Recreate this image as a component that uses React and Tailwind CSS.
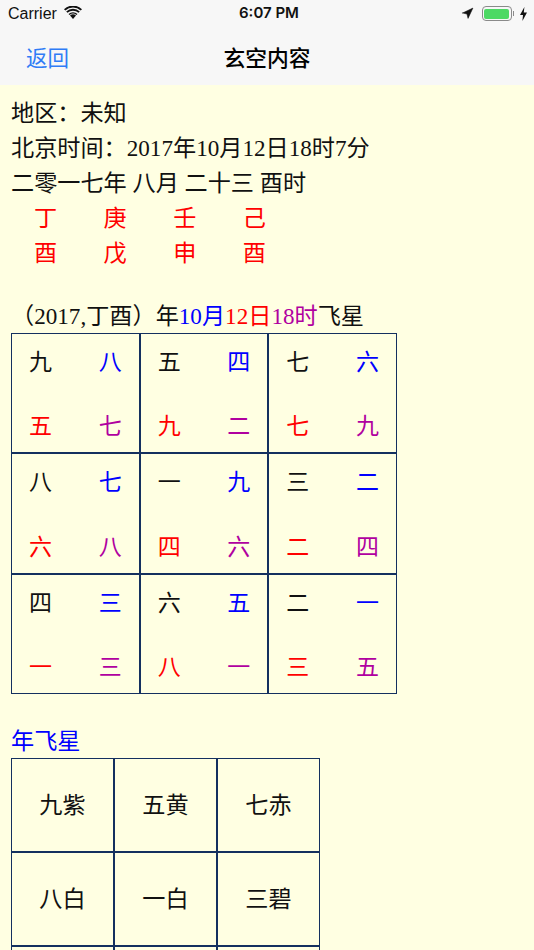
import { Navigation } from "lucide-react";

const SERIF = "font-['Liberation_Serif','Noto_Sans_CJK_SC',serif]";

const GANZHI = [
  ["丁", "庚", "壬", "己"],
  ["酉", "戊", "申", "酉"],
];

const FLY = [
  ["九", "八", "五", "七"],
  ["五", "四", "九", "二"],
  ["七", "六", "七", "九"],
  ["八", "七", "六", "八"],
  ["一", "九", "四", "六"],
  ["三", "二", "二", "四"],
  ["四", "三", "一", "三"],
  ["六", "五", "八", "一"],
  ["二", "一", "三", "五"],
];

// the third row of this table starts right at the bottom edge, its text is below the fold
const YEAR = ["九紫", "五黄", "七赤", "八白", "一白", "三碧", "", "", ""];

function Wifi() {
  return (
    <svg width="18" height="13" viewBox="0 0 18 13" className="ml-[7px] -mt-[2px]">
      <path d="M9 13 L6 9.6 A4.6 4.6 0 0 1 12 9.6 Z" fill="#111" />
      <path d="M4.5 7.9 A6.9 6.9 0 0 1 13.5 7.9 L12.4 9 A5.4 5.4 0 0 0 5.6 9 Z" fill="#111" />
      <path d="M2.2 5.5 A10 10 0 0 1 15.8 5.5 L14.5 6.8 A8.2 8.2 0 0 0 3.5 6.8 Z" fill="#111" />
      <path d="M0 3.2 A13 13 0 0 1 18 3.2 L16.7 4.5 A11.2 11.2 0 0 0 1.3 4.5 Z" fill="#111" />
    </svg>
  );
}

function Bolt() {
  return (
    <svg width="7" height="14" viewBox="0 0 7 14">
      <path d="M4.4 0 L0 8 L3 8 L2.4 14 L7 5.6 L3.8 5.6 Z" fill="#111" />
    </svg>
  );
}

function StatusBar() {
  return (
    <div className="h-[27px] flex items-center justify-between relative pl-2 pr-[7px] text-[16px] text-[#111] font-['Liberation_Sans',sans-serif]">
      <div className="flex items-center">
        <span>Carrier</span>
        <Wifi />
      </div>
      <span className="absolute left-[239px] text-[15px] font-semibold font-['Inter',sans-serif]">6:07 PM</span>
      <div className="flex items-center">
        <Navigation size={13} fill="#111" strokeWidth={1} className="mr-[8px]" />
        <div className="w-[30px] h-[15px] rounded-[4px] border-[1.5px] border-[#8a8a8a] p-[1.5px]">
          <div className="w-full h-full rounded-[2px] bg-[#4cd964]" />
        </div>
        <div className="w-[1.5px] h-[5px] bg-[#8a8a8a] ml-[1px] mr-[6px]" />
        <Bolt />
      </div>
    </div>
  );
}

function NavBar() {
  return (
    <div className="h-[58px] flex items-center justify-center relative pt-[2px] font-['Noto_Sans_CJK_SC',sans-serif]">
      <span className="absolute left-[26px] text-[21.5px] text-[#2f7cf6]">返回</span>
      <span className="text-[21.75px] font-medium text-black">玄空内容</span>
    </div>
  );
}

function FlyCell({ c }) {
  return (
    <div className="border border-[#14305f] grid grid-cols-2 grid-rows-2 h-[120.33px] px-[17px] pt-[11px] pb-[8px] text-[23px] leading-[35px]">
      <span className="text-[#111]">{c[0]}</span>
      <span className="text-[#0000ff] text-right">{c[1]}</span>
      <span className="text-[#ff0000] self-end">{c[2]}</span>
      <span className="text-[#b000a0] text-right self-end">{c[3]}</span>
    </div>
  );
}

export default function App() {
  return (
    <div className="w-[534px] h-[950px] overflow-hidden bg-[#ffffe2]">
      <div className="bg-[#f7f7f7] h-[85px]">
        <StatusBar />
        <NavBar />
      </div>
      <div className={`${SERIF} pl-[11px] pt-[11px] text-[23.15px] leading-[35px] text-[#111]`}>
        <div>地区：未知</div>
        <div>北京时间：2017年10月12日18时7分</div>
        <div>二零一七年 八月 二十三 酉时</div>
        {GANZHI.map((row, i) => (
          <div key={i} className="flex pl-[23px] text-[#ff0000]">
            {row.map((g, j) => (
              <span key={j} className="w-[69.6px]">{g}</span>
            ))}
          </div>
        ))}
        <div className="mt-[28px] h-[34px]">
          <span>（2017,丁酉）年</span>
          <span className="text-[#0000ff]">10月</span>
          <span className="text-[#ff0000]">12日</span>
          <span className="text-[#b000a0]">18时</span>
          <span>飞星</span>
        </div>
        <div className="grid grid-cols-3 w-[386px]">
          {FLY.map((c, i) => (
            <FlyCell key={i} c={c} />
          ))}
        </div>
        <div className="mt-[30px] h-[34px] text-[#0000ff]">年飞星</div>
        <div className="grid grid-cols-3 w-[309px]">
          {YEAR.map((t, i) => (
            <div key={i} className="border border-[#14305f] h-[94px] pt-[2px] flex items-center justify-center text-[#111]">
              {t}
            </div>
          ))}
        </div>
      </div>
    </div>
  );
}
